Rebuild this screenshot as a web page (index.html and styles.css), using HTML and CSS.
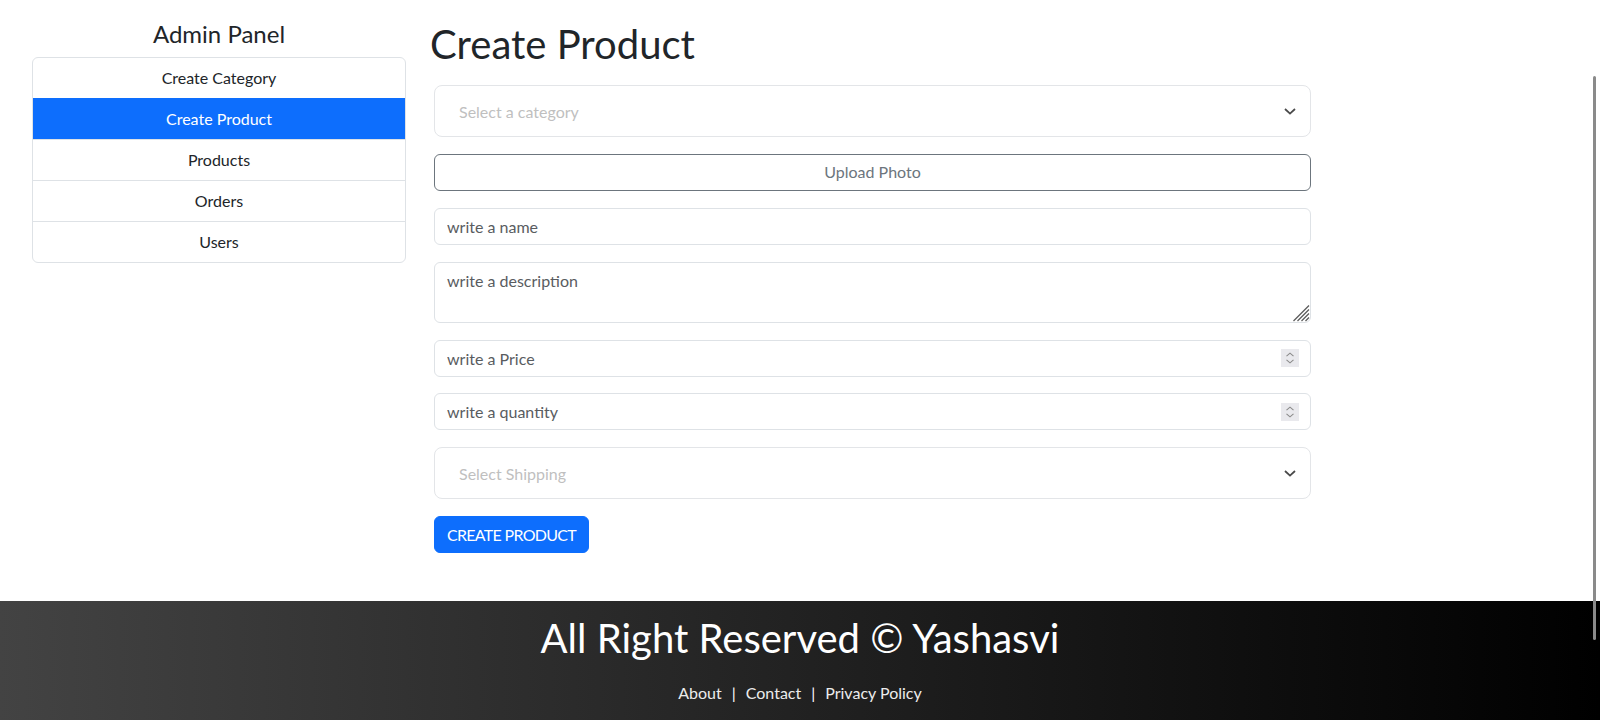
FILE: index.html
```html
<!DOCTYPE html>
<html lang="en">
<head>
<meta charset="utf-8">
<title>Create Product - Admin Panel</title>
<link rel="stylesheet" href="styles.css">
</head>
<body>
<div class="page">
  <div class="layout">
    <aside class="sidebar">
      <h4 class="side-title">Admin Panel</h4>
      <nav class="list-group">
        <a class="list-item" href="#">Create Category</a>
        <a class="list-item active" href="#">Create Product</a>
        <a class="list-item" href="#">Products</a>
        <a class="list-item" href="#">Orders</a>
        <a class="list-item" href="#">Users</a>
      </nav>
    </aside>
    <main class="main">
      <h1 class="page-title">Create Product</h1>
      <form class="form">
        <div class="select">
          <span class="select-ph">Select a category</span>
          <svg class="chev" viewBox="0 0 12 7" width="12" height="7"><path d="M1 1 L6 5.6 L11 1" fill="none" stroke="#4a4a4a" stroke-width="1.8"/></svg>
        </div>
        <label class="upload">Upload Photo<input type="file" class="file-hidden"></label>
        <input class="control" type="text" placeholder="write a name">
        <div class="field">
          <textarea class="control textarea" placeholder="write a description"></textarea>
          <svg class="grip" viewBox="0 0 18 18" width="18" height="18"><path d="M17 1.5 L1.5 17 M17 5.5 L5.5 17 M17 9.5 L9.5 17 M17 13.5 L13.5 17" stroke="#5e5e5e" stroke-width="1.3" fill="none"/></svg>
        </div>
        <div class="field">
          <input class="control num" type="number" placeholder="write a Price">
          <span class="spin"><svg viewBox="0 0 18 18" width="18" height="18"><path d="M5.5 7.2 L9 4.2 L12.5 7.2 M5.5 10.8 L9 13.8 L12.5 10.8" stroke="#8a8a8a" stroke-width="1.1" fill="none"/></svg></span>
        </div>
        <div class="field">
          <input class="control num" type="number" placeholder="write a quantity">
          <span class="spin"><svg viewBox="0 0 18 18" width="18" height="18"><path d="M5.5 7.2 L9 4.2 L12.5 7.2 M5.5 10.8 L9 13.8 L12.5 10.8" stroke="#8a8a8a" stroke-width="1.1" fill="none"/></svg></span>
        </div>
        <div class="select">
          <span class="select-ph">Select Shipping</span>
          <svg class="chev" viewBox="0 0 12 7" width="12" height="7"><path d="M1 1 L6 5.6 L11 1" fill="none" stroke="#4a4a4a" stroke-width="1.8"/></svg>
        </div>
        <button type="button" class="btn-primary">CREATE PRODUCT</button>
      </form>
    </main>
  </div>
  <footer class="footer">
    <h1 class="footer-title">All Right Reserved &copy; Yashasvi</h1>
    <p class="footer-links"><a href="#">About</a>|<a href="#">Contact</a>|<a href="#">Privacy Policy</a></p>
  </footer>
</div>
<div class="scroll-thumb"></div>
</body>
</html>
```

FILE: styles.css
```css
* { box-sizing: border-box; }
html, body { margin: 0; height: 100%; overflow: hidden; }
body {
  font-family: Lato, "Open Sans", sans-serif;
  font-size: 16px;
  line-height: 1.5;
  color: #212529;
  background: #fff;
}
.page { display: flex; flex-direction: column; min-height: 100%; }
.layout { display: flex; gap: 24px; padding: 20px 0 0 32px; height: 601px; flex: none; }

.sidebar { width: 374px; flex: none; }
.side-title { margin: 0 0 8px; font-size: 24px; font-weight: 400; line-height: 28.8px; text-align: center; }
.list-group { display: flex; flex-direction: column; border: 1px solid #dee2e6; border-radius: 6px; overflow: hidden; }
.list-item {
  display: block; padding: 8px 16px; line-height: 24px; text-align: center;
  color: #212529; text-decoration: none; border-top: 1px solid #dee2e6;
}
.list-item:first-child { border-top: 0; }
.list-item.active { background: #0d6efd; color: #fff; border-top-color: #0d6efd; }

.main { width: 1170px; flex: none; }
.page-title { margin: 0; font-size: 40px; font-weight: 400; line-height: 48px; }
.form { margin: 17px 0 0 4px; width: 877px; display: flex; flex-direction: column; gap: 16.9px; align-items: flex-start; }

.select {
  width: 100%; height: 52px; border: 1px solid #e3e5e8; border-radius: 8px;
  display: flex; align-items: center; justify-content: space-between; padding: 1px 14px 0 24px;
}
.select-ph { color: #bfbfbf; }
.chev { display: block; }

.upload {
  width: 100%; height: 37px; border: 1px solid #6c757d; border-radius: 6px; color: #6c757d;
  display: flex; align-items: center; justify-content: center;
}
.file-hidden { display: none; }

.field { position: relative; width: 100%; }
.control {
  display: block; width: 100%; height: 37px; padding: 6px 12px; margin: 0;
  border: 1px solid #dee2e6; border-radius: 6px; background: #fff;
  font-family: inherit; font-size: 16px; line-height: 24px; color: #212529; outline: none;
}
.control::placeholder { color: #595c5f; opacity: 1; }
.textarea { height: 61px; resize: none; }
.grip { position: absolute; right: 1px; bottom: 1px; pointer-events: none; }
.num { -moz-appearance: textfield; }
.num::-webkit-inner-spin-button, .num::-webkit-outer-spin-button { -webkit-appearance: none; margin: 0; }
.spin {
  position: absolute; right: 12px; top: 50%; transform: translateY(-50%);
  width: 18px; height: 18px; background: #e9e9ed; display: flex;
}

.btn-primary {
  height: 37px; padding: 0 12px; background: #0d6efd; color: #fff; border: 1px solid #0d6efd;
  border-radius: 6px; font-family: inherit; font-size: 16px; letter-spacing: -0.7px; cursor: pointer;
}

.footer {
  flex: 1; background: linear-gradient(to right, #434343, #000000); color: #fff;
  padding: 13px 10px 0; text-align: center;
}
.footer-title { margin: 0; font-size: 40px; font-weight: 400; line-height: 48px; }
.footer-links { margin: 19px 0 0; line-height: 24px; }
.footer-links a { color: #ececec; text-decoration: none; padding: 0 10px; }

.scroll-thumb { position: fixed; top: 76px; right: 4px; width: 3px; height: 564px; background: #8a8a8a; border-radius: 2px; }
```
